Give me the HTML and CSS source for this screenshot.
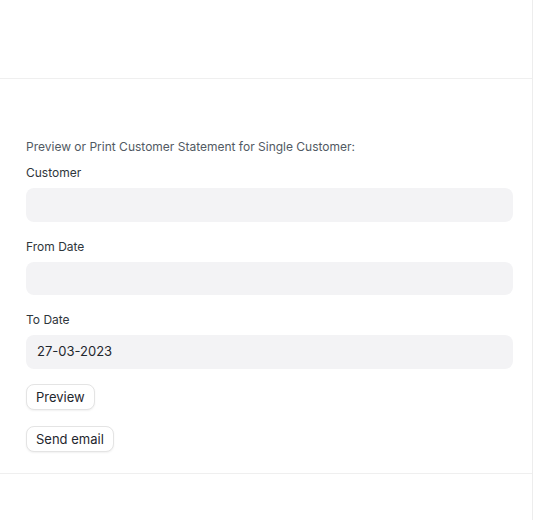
FILE: index.html
```html
<!DOCTYPE html>
<html>
<head>
<meta charset="utf-8">
<link rel="stylesheet" href="styles.css">
</head>
<body>
<div class="page">
  <div class="header"></div>
  <div class="section">
    <p class="intro">Preview or Print Customer Statement for Single Customer:</p>
    <div class="group">
      <label class="label">Customer</label>
      <div class="input"></div>
    </div>
    <div class="group">
      <label class="label">From Date</label>
      <div class="input"></div>
    </div>
    <div class="group group-last">
      <label class="label">To Date</label>
      <div class="input">27-03-2023</div>
    </div>
    <div class="actions">
      <button class="btn">Preview</button>
      <button class="btn">Send email</button>
    </div>
  </div>
  <div class="footer"></div>
</div>
</body>
</html>
```
FILE: styles.css
```css
html, body {
  margin: 0;
  padding: 0;
  background: #ffffff;
  font-family: Inter, "Noto Sans", sans-serif;
}
.page {
  width: 532px;
  min-height: 520px;
  border-right: 1px solid #ededed;
  box-sizing: content-box;
}
.header {
  height: 78px;
  border-bottom: 1px solid #efefef;
}
.section {
  padding: 60px 19px 21px 26px;
  border-bottom: 1px solid #efefef;
}
.intro {
  margin: 0 0 10px;
  font-size: 12px;
  line-height: 16px;
  color: #525a63;
}
.group {
  margin-bottom: 17px;
}
.group-last {
  margin-bottom: 0;
}
.label {
  display: block;
  font-size: 12px;
  line-height: 16px;
  color: #2f363c;
  margin-bottom: 7px;
}
.input {
  height: 33.5px;
  box-sizing: border-box;
  background: #f3f3f5;
  border-radius: 8px;
  padding: 0 11px;
  font-size: 13px;
  line-height: 33.5px;
  color: #1f272e;
}
.actions {
  display: flex;
  flex-direction: column;
  align-items: flex-start;
  gap: 16px;
  padding-top: 15px;
}
.btn {
  height: 26px;
  padding: 0 9px;
  background: #ffffff;
  border: 1px solid #e4e4e4;
  border-radius: 8px;
  box-shadow: 0 1px 2px rgba(0,0,0,0.06);
  font-family: Inter, "Noto Sans", sans-serif;
  font-size: 13px;
  color: #1f272e;
  cursor: pointer;
}
```
